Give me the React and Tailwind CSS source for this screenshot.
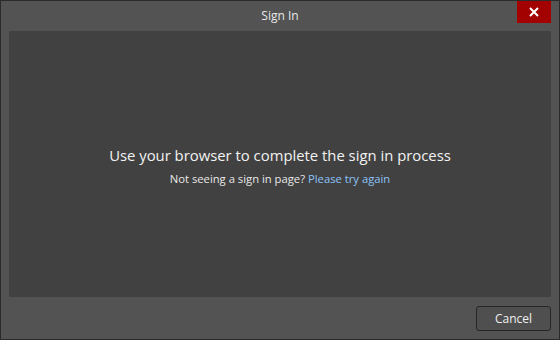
export default function App() {
  return (
    <div
      className="w-[560px] h-[340px] bg-[#535353] border border-[#2b2b2b] flex flex-col text-[#f0f0f0]"
      style={{ fontFamily: '"Open Sans", "Noto Sans", sans-serif' }}
    >
      <div className="h-[30px] flex items-start relative">
        <div className="flex-1 text-center text-[12px] leading-[30px] text-[#e8e8e8]">Sign In</div>
        <button className="absolute right-[8px] top-0 w-[34px] h-[22px] bg-[#a30000] flex items-center justify-center">
          <svg width="10" height="10" viewBox="0 0 10 10">
            <path d="M1 1 L9 9 M9 1 L1 9" stroke="#ffffff" strokeWidth="2" />
          </svg>
        </button>
      </div>
      <div className="mx-[8px] h-[266px] bg-[#414141] flex flex-col items-center justify-center">
        <div className="text-[14.85px] leading-[22px] text-[#f2f2f2] mt-[3px]">
          Use your browser to complete the sign in process
        </div>
        <div className="text-[11.25px] leading-[18px] mt-[4px] text-[#e8e8e8]">
          Not seeing a sign in page? <span className="text-[#8cc4f8]">Please try again</span>
        </div>
      </div>
      <div className="flex justify-end pr-[8px] pt-[9px]">
        <button className="w-[75px] h-[25px] rounded-[3px] border border-[#262626] bg-[#4f4f4f] text-[12px] text-[#f0f0f0]">
          Cancel
        </button>
      </div>
    </div>
  );
}
